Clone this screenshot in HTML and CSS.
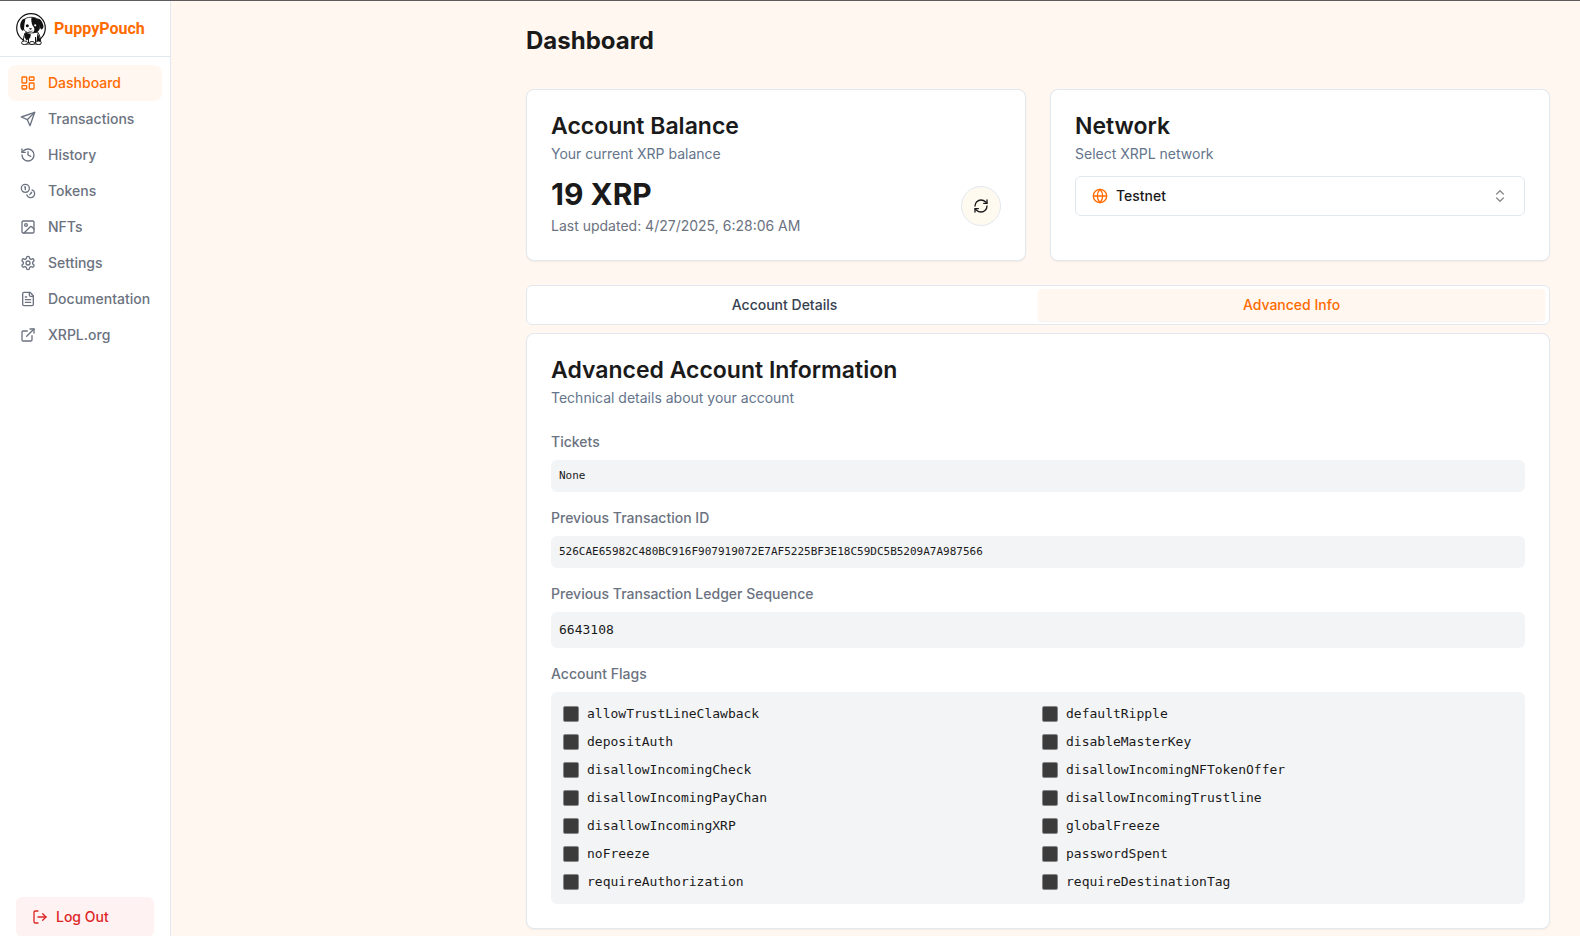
FILE: index.html
```html
<!DOCTYPE html>
<html lang="en">
<head>
<meta charset="utf-8">
<meta name="viewport" content="width=device-width, initial-scale=1">
<title>PuppyPouch - Dashboard</title>
<link rel="stylesheet" href="styles.css">
</head>
<body>
<div class="app">
  <aside class="sidebar">
    <div class="brand">
      <svg class="brand-logo" viewBox="0 0 30 32" aria-hidden="true">
        <circle cx="15" cy="15" r="14.3" fill="#fff" stroke="#111" stroke-width="1.2"/>
        <path d="M9 20C7.500 24 7 28 7.500 31H24.500C25 27 24 22 21.500 19Z" fill="#fff" stroke="#111" stroke-width="1"/>
        <path d="M9.500 19.500 15 21.500 14 25 10.500 27.500 8.500 24Z" fill="#111"/>
        <path d="M21.500 20 24.500 27 24 30 20.500 28Z" fill="#111"/>
        <path d="M8.500 6.500C10 3.800 19 3.300 22 6.500 24.300 9.500 24.500 14.500 22.500 17.500 20 20.800 11 20.800 8.500 17.500 6.300 14 6.500 9.500 8.500 6.500Z" fill="#fff" stroke="#111" stroke-width=".8"/>
        <path d="M15.500 4.500C18 4.200 21 5 22.300 7 24.400 10.500 24.200 15 22.300 17.700 20.500 19.600 18.500 19.800 16.500 19.800 19.500 17.500 18.500 14.500 16.500 12.500 15.500 10 15 7 15.500 4.500Z" fill="#111"/>
        <path d="M9.500 5.500C6 5.500 4.800 8.500 4.200 12 4 15 5 17 7 18 8.500 16 8 13.500 8.500 11Z" fill="#111"/>
        <path d="M21.500 5.500C25 6 26.500 9 27.500 13 27.500 15 26.500 16.500 25 16.500 23 14 23.500 10 21.500 5.500Z" fill="#111"/>
        <circle cx="11.300" cy="12.800" r="1.500" fill="#111"/>
        <circle cx="19.200" cy="12.300" r="1.100" fill="#fff"/>
        <path d="M12.800 15.200H16.200L14.500 17Z" fill="#111"/>
        <path d="M12.500 18Q14.500 19 16.500 18" fill="none" stroke="#111" stroke-width=".6"/>
        <path d="M12.500 24V30M19.500 24V30" stroke="#111" stroke-width="1"/>
        <ellipse cx="8.500" cy="29.800" rx="3" ry="1.800" fill="#fff" stroke="#111" stroke-width=".9"/>
        <ellipse cx="16" cy="30" rx="2.600" ry="1.500" fill="#fff" stroke="#111" stroke-width=".9"/>
        <ellipse cx="22.500" cy="29.800" rx="2.800" ry="1.800" fill="#fff" stroke="#111" stroke-width=".9"/>
      </svg>
      <span class="brand-name">PuppyPouch</span>
    </div>
    <nav class="nav" aria-label="Main">
      <a class="nav-link nav-link-active" href="#dashboard" aria-current="page">
        <svg class="icon" viewBox="0 0 24 24" aria-hidden="true"><rect width="7" height="9" x="3" y="3" rx="1"/><rect width="7" height="5" x="14" y="3" rx="1"/><rect width="7" height="9" x="14" y="12" rx="1"/><rect width="7" height="5" x="3" y="16" rx="1"/></svg>
        Dashboard
      </a>
      <a class="nav-link" href="#transactions">
        <svg class="icon" viewBox="0 0 24 24" aria-hidden="true"><path d="m22 2-7 20-4-9-9-4Z"/><path d="M22 2 11 13"/></svg>
        Transactions
      </a>
      <a class="nav-link" href="#history">
        <svg class="icon" viewBox="0 0 24 24" aria-hidden="true"><path d="M3 12a9 9 0 1 0 9-9 9.750 9.750 0 0 0-6.740 2.740L3 8"/><path d="M3 3v5h5"/><path d="M12 7v5l4 2"/></svg>
        History
      </a>
      <a class="nav-link" href="#tokens">
        <svg class="icon" viewBox="0 0 24 24" aria-hidden="true"><circle cx="8" cy="8" r="6"/><path d="M18.090 10.370A6 6 0 1 1 10.340 18"/><path d="M7 6h1v4"/><path d="m16.710 13.880.7.710-2.820 2.820"/></svg>
        Tokens
      </a>
      <a class="nav-link" href="#nfts">
        <svg class="icon" viewBox="0 0 24 24" aria-hidden="true"><rect width="18" height="18" x="3" y="3" rx="2"/><circle cx="9" cy="9" r="2"/><path d="m21 15-3.086-3.086a2 2 0 0 0-2.828 0L6 21"/></svg>
        NFTs
      </a>
      <a class="nav-link" href="#settings">
        <svg class="icon" viewBox="0 0 24 24" aria-hidden="true"><path d="M12.220 2h-.44a2 2 0 0 0-2 2v.18a2 2 0 0 1-1 1.730l-.43.25a2 2 0 0 1-2 0l-.15-.08a2 2 0 0 0-2.730.73l-.22.38a2 2 0 0 0 .73 2.730l.15.1a2 2 0 0 1 1 1.720v.51a2 2 0 0 1-1 1.740l-.15.09a2 2 0 0 0-.73 2.730l.22.38a2 2 0 0 0 2.730.73l.15-.08a2 2 0 0 1 2 0l.43.25a2 2 0 0 1 1 1.730V20a2 2 0 0 0 2 2h.44a2 2 0 0 0 2-2v-.18a2 2 0 0 1 1-1.730l.43-.25a2 2 0 0 1 2 0l.15.08a2 2 0 0 0 2.730-.73l.22-.39a2 2 0 0 0-.73-2.730l-.15-.08a2 2 0 0 1-1-1.740v-.5a2 2 0 0 1 1-1.740l.15-.09a2 2 0 0 0 .73-2.730l-.22-.38a2 2 0 0 0-2.730-.73l-.15.08a2 2 0 0 1-2 0l-.43-.25a2 2 0 0 1-1-1.730V4a2 2 0 0 0-2-2z"/><circle cx="12" cy="12" r="3"/></svg>
        Settings
      </a>
      <a class="nav-link" href="#documentation">
        <svg class="icon" viewBox="0 0 24 24" aria-hidden="true"><path d="M15 2H6a2 2 0 0 0-2 2v16a2 2 0 0 0 2 2h12a2 2 0 0 0 2-2V7Z"/><path d="M14 2v4a2 2 0 0 0 2 2h4"/><path d="M10 9H8"/><path d="M16 13H8"/><path d="M16 17H8"/></svg>
        Documentation
      </a>
      <a class="nav-link" href="#xrpl">
        <svg class="icon" viewBox="0 0 24 24" aria-hidden="true"><path d="M15 3h6v6"/><path d="M10 14 21 3"/><path d="M18 13v6a2 2 0 0 1-2 2H5a2 2 0 0 1-2-2V8a2 2 0 0 1 2-2h6"/></svg>
        XRPL.org
      </a>
    </nav>
    <div class="sidebar-footer">
      <button class="logout" type="button">
        <svg class="icon" viewBox="0 0 24 24" aria-hidden="true"><path d="M9 21H5a2 2 0 0 1-2-2V5a2 2 0 0 1 2-2h4"/><path d="m16 17 5-5-5-5"/><path d="M21 12H9"/></svg>
        Log Out
      </button>
    </div>
  </aside>

  <main class="main">
    <div class="content">
      <h1 class="page-title">Dashboard</h1>

      <div class="summary">
        <section class="card">
          <h2 class="card-title">Account Balance</h2>
          <p class="card-desc">Your current XRP balance</p>
          <div class="balance-row">
            <div class="balance-text">
              <p class="balance">19 XRP</p>
              <p class="updated">Last updated: 4/27/2025, 6:28:06 AM</p>
            </div>
            <button class="refresh" type="button" aria-label="Refresh balance">
              <svg class="icon" viewBox="0 0 24 24" aria-hidden="true"><path d="M3 12a9 9 0 0 1 9-9 9.750 9.750 0 0 1 6.740 2.740L21 8"/><path d="M21 3v5h-5"/><path d="M21 12a9 9 0 0 1-9 9 9.750 9.750 0 0 1-6.740-2.740L3 16"/><path d="M8 16H3v5"/></svg>
            </button>
          </div>
        </section>

        <section class="card">
          <h2 class="card-title" id="network-title">Network</h2>
          <p class="card-desc">Select XRPL network</p>
          <div class="select-wrap">
            <select class="select" aria-labelledby="network-title">
              <option>Testnet</option>
              <option>Mainnet</option>
              <option>Devnet</option>
            </select>
            <svg class="icon select-globe" viewBox="0 0 24 24" aria-hidden="true"><circle cx="12" cy="12" r="10"/><path d="M12 2a14.500 14.500 0 0 0 0 20 14.500 14.500 0 0 0 0-20"/><path d="M2 12h20"/></svg>
            <svg class="icon select-arrows" viewBox="0 0 24 24" aria-hidden="true"><path d="m7 15 5 5 5-5"/><path d="m7 9 5-5 5 5"/></svg>
          </div>
        </section>
      </div>

      <div class="tabs" role="tablist">
        <button class="tab" type="button" role="tab" aria-selected="false">Account Details</button>
        <button class="tab tab-active" type="button" role="tab" aria-selected="true">Advanced Info</button>
      </div>

      <section class="card" role="tabpanel">
        <h2 class="card-title">Advanced Account Information</h2>
        <p class="card-desc">Technical details about your account</p>
        <div class="fields">
          <div class="field">
            <h3 class="field-label">Tickets</h3>
            <p class="value value-small">None</p>
          </div>
          <div class="field">
            <h3 class="field-label">Previous Transaction ID</h3>
            <p class="value value-small">526CAE65982C480BC916F907919072E7AF5225BF3E18C59DC5B5209A7A987566</p>
          </div>
          <div class="field">
            <h3 class="field-label">Previous Transaction Ledger Sequence</h3>
            <p class="value">6643108</p>
          </div>
          <div class="field">
            <h3 class="field-label">Account Flags</h3>
            <div class="flags">
              <label class="flag"><input class="check" type="checkbox" disabled>allowTrustLineClawback</label>
              <label class="flag"><input class="check" type="checkbox" disabled>defaultRipple</label>
              <label class="flag"><input class="check" type="checkbox" disabled>depositAuth</label>
              <label class="flag"><input class="check" type="checkbox" disabled>disableMasterKey</label>
              <label class="flag"><input class="check" type="checkbox" disabled>disallowIncomingCheck</label>
              <label class="flag"><input class="check" type="checkbox" disabled>disallowIncomingNFTokenOffer</label>
              <label class="flag"><input class="check" type="checkbox" disabled>disallowIncomingPayChan</label>
              <label class="flag"><input class="check" type="checkbox" disabled>disallowIncomingTrustline</label>
              <label class="flag"><input class="check" type="checkbox" disabled>disallowIncomingXRP</label>
              <label class="flag"><input class="check" type="checkbox" disabled>globalFreeze</label>
              <label class="flag"><input class="check" type="checkbox" disabled>noFreeze</label>
              <label class="flag"><input class="check" type="checkbox" disabled>passwordSpent</label>
              <label class="flag"><input class="check" type="checkbox" disabled>requireAuthorization</label>
              <label class="flag"><input class="check" type="checkbox" disabled>requireDestinationTag</label>
            </div>
          </div>
        </div>
      </section>
    </div>
  </main>
</div>
</body>
</html>
```
FILE: styles.css
```css
:root {
  --orange: #ff6b00;
  --cream: #fff7f0;
  --line: #e2e8f0;
  --ink: #1a1a1a;
  --gray: #6b7280;
  --slate: #64748b;
}

* {
  box-sizing: border-box;
}

body,
h1,
h2,
h3,
p {
  margin: 0;
}

body {
  background: var(--cream);
  color: var(--ink);
  font-family: Inter, "Liberation Sans", sans-serif;
  font-size: 14px;
  line-height: 20px;
}

button,
select {
  font: inherit;
  cursor: pointer;
}

.app {
  display: flex;
  align-items: flex-start;
  height: 100vh;
  min-height: 600px;
  overflow: hidden;
  border-top: 1px solid #5f5b5f;
}

.icon {
  flex: none;
  width: 16px;
  height: 16px;
  fill: none;
  stroke: currentColor;
  stroke-width: 2;
  stroke-linecap: round;
  stroke-linejoin: round;
}

/* Sidebar */
.sidebar {
  display: flex;
  flex: none;
  flex-direction: column;
  width: 171px;
  height: 100vh;
  background: #fff;
  border-right: 1px solid var(--line);
}

.brand {
  display: flex;
  align-items: center;
  gap: 8px;
  height: 56px;
  padding: 0 16px;
  border-bottom: 1px solid var(--line);
}

.brand-logo {
  flex: none;
  width: 30px;
  height: 32px;
}

.brand-name {
  color: var(--orange);
  font-family: Roboto, sans-serif;
  font-size: 16px;
  font-weight: 700;
}

.nav {
  display: flex;
  flex: 1;
  flex-direction: column;
  padding: 8px;
}

.nav-link {
  display: flex;
  align-items: center;
  gap: 12px;
  padding: 8px 12px;
  border-radius: 8px;
  color: var(--gray);
  font-weight: 500;
  text-decoration: none;
}

.nav-link-active {
  background: var(--cream);
  color: var(--orange);
}

.sidebar-footer {
  padding: 0 16px;
}

.logout {
  display: flex;
  align-items: center;
  gap: 8px;
  width: 100%;
  height: 40px;
  padding: 0 16px;
  border: 0;
  border-radius: 6px;
  background: #fef2f2;
  color: #dc2626;
  font-weight: 500;
}

/* Page */
.main {
  flex: 1;
  min-width: 0;
  padding: 24px 30px 0;
}

.content {
  max-width: 1024px;
  margin-left: auto;
}

.page-title {
  margin-bottom: 32px;
  font-size: 24px;
  font-weight: 700;
  line-height: 32px;
}

.summary {
  display: grid;
  grid-template-columns: 1fr 1fr;
  gap: 24px;
  margin-bottom: 24px;
}

.card {
  padding: 24px;
  border: 1px solid var(--line);
  border-radius: 8px;
  background: #fff;
  box-shadow: 0 1px 2px rgba(0, 0, 0, 0.05);
}

.card-title {
  margin-bottom: 6px;
  font-size: 23px;
  font-weight: 600;
  line-height: 24px;
}

.card-desc {
  color: var(--slate);
}

.balance-row {
  display: flex;
  align-items: center;
  justify-content: space-between;
  margin-top: 12px;
}

.balance {
  margin-bottom: 4px;
  font-size: 30px;
  font-weight: 700;
  line-height: 36px;
}

.updated {
  color: var(--gray);
}

.refresh {
  display: flex;
  align-items: center;
  justify-content: center;
  width: 40px;
  height: 40px;
  padding: 0;
  border: 1px solid var(--line);
  border-radius: 50%;
  background: #fffaf0;
  color: var(--ink);
}

.select-wrap {
  position: relative;
  margin-top: 12px;
}

.select {
  display: block;
  width: 100%;
  height: 40px;
  padding: 0 40px;
  border: 1px solid var(--line);
  border-radius: 6px;
  appearance: none;
  background: #fff;
  color: var(--ink);
  font-weight: 500;
}

.select-globe,
.select-arrows {
  position: absolute;
  top: 12px;
  pointer-events: none;
}

.select-globe {
  left: 17px;
  color: var(--orange);
}

.select-arrows {
  right: 17px;
  opacity: 0.5;
}

.tabs {
  display: grid;
  grid-template-columns: 1fr 1fr;
  align-items: center;
  align-content: center;
  height: 40px;
  margin-bottom: 8px;
  padding: 0 4px;
  border: 1px solid var(--line);
  border-radius: 6px;
  background: #fff;
}

.tab {
  padding: 6px 12px;
  border: 0;
  border-radius: 4px;
  background: transparent;
  color: #374151;
  font-weight: 500;
}

.tab-active {
  background: var(--cream);
  color: var(--orange);
  box-shadow: 0 1px 2px rgba(0, 0, 0, 0.05);
}

.fields {
  display: grid;
  gap: 16px;
  margin-top: 24px;
}

.field {
  display: grid;
  gap: 8px;
}

.field-label {
  color: var(--gray);
  font-size: 14px;
  font-weight: 500;
}

.value,
.flags {
  border-radius: 6px;
  background: #f3f4f6;
  font-family: "DejaVu Sans Mono", monospace;
  font-size: 13px;
}

.value {
  padding: 8px;
  overflow-wrap: anywhere;
}

.value-small {
  font-size: 11px;
  line-height: 16px;
}

.flags {
  display: grid;
  grid-template-columns: 1fr 1fr;
  gap: 8px;
  padding: 12px;
}

.flag {
  display: flex;
  align-items: center;
  gap: 8px;
}

.check {
  flex: none;
  width: 16px;
  height: 16px;
  margin: 0;
  border: 1px solid #858585;
  border-radius: 2px;
  appearance: none;
  background: #3b3b3b;
}
```
